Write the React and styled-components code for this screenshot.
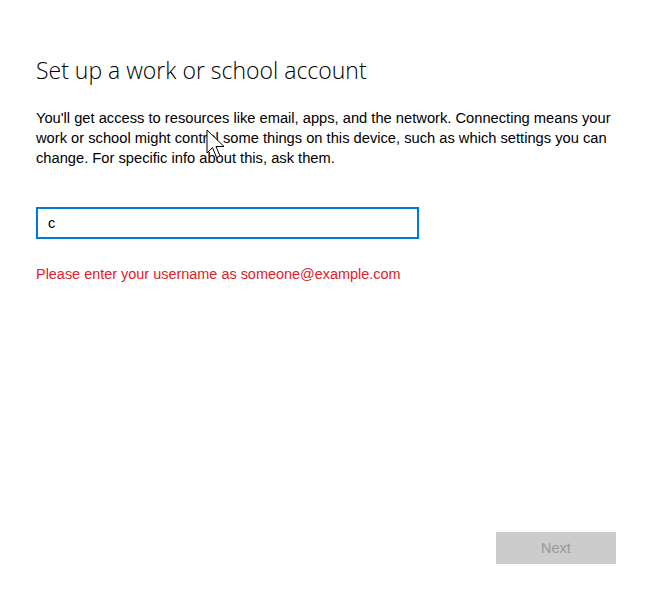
import React from "react";
import styled, { createGlobalStyle } from "styled-components";

const GlobalStyle = createGlobalStyle`
  html, body {
    margin: 0;
    padding: 0;
    background: #ffffff;
  }
  body {
    font-family: "Liberation Sans", Arial, sans-serif;
  }
`;

const Page = styled.div`
  position: relative;
  width: 652px;
  height: 600px;
  box-sizing: border-box;
  padding: 54px 36px 0 36px;
  display: flex;
  flex-direction: column;
  color: #000000;
`;

const Title = styled.h1`
  margin: 0;
  font-family: "Open Sans", "Liberation Sans", sans-serif;
  font-weight: 300;
  font-size: 23px;
  line-height: 32px;
  color: #000000;
`;

const Description = styled.p`
  margin: 22px 0 0 0;
  font-size: 14.7px;
  line-height: 20px;
  white-space: nowrap;
`;

const Field = styled.input`
  margin-top: 39px;
  width: 383px;
  height: 32px;
  box-sizing: border-box;
  border: 2px solid #0078d7;
  padding: 0 10px;
  font-family: "Liberation Sans", Arial, sans-serif;
  font-size: 14.5px;
  color: #000000;
  outline: none;
`;

const ErrorText = styled.div`
  margin-top: 25px;
  font-size: 14.45px;
  line-height: 20px;
  color: #e0202a;
`;

const Footer = styled.div`
  margin-top: auto;
  margin-bottom: 36px;
  display: flex;
  justify-content: flex-end;
`;

const Button = styled.button`
  width: 120px;
  height: 32px;
  border: none;
  background: #cccccc;
  color: #999999;
  font-family: "Liberation Sans", Arial, sans-serif;
  font-size: 14.5px;
`;

const Pointer = styled.svg`
  position: absolute;
  left: 206px;
  top: 129px;
`;

export default function App() {
  return (
    <>
      <GlobalStyle />
      <Page>
        <Title>Set up a work or school account</Title>
        <Description>
          You'll get access to resources like email, apps, and the network. Connecting means your
          <br />
          work or school might control some things on this device, such as which settings you can
          <br />
          change. For specific info about this, ask them.
        </Description>
        <Field defaultValue="c" />
        <ErrorText>Please enter your username as someone@example.com</ErrorText>
        <Footer>
          <Button disabled>Next</Button>
        </Footer>
        <Pointer width="21" height="31" viewBox="0 0 21 31">
          <path
            d="M1 1 L1 24 L6.5 18.5 L10.5 28.5 L14 27 L10 17.5 L18 17.5 Z"
            fill="#ffffff"
            stroke="#000000"
            strokeWidth="1"
            strokeLinejoin="miter"
          />
        </Pointer>
      </Page>
    </>
  );
}
